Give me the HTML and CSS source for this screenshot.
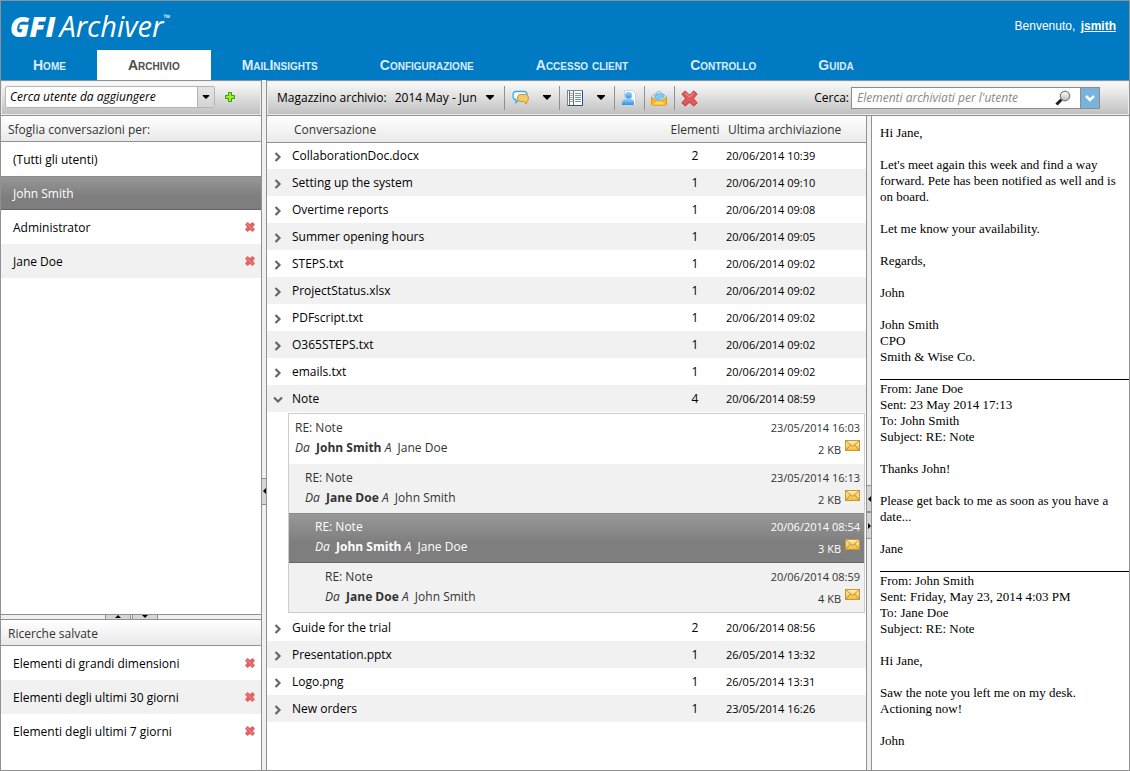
FILE: index.html
```html
<!DOCTYPE html>
<html lang="it">
<head>
<meta charset="utf-8">
<title>GFI Archiver</title>
<link rel="stylesheet" href="styles.css">
</head>
<body>
<svg class="defs" width="0" height="0" aria-hidden="true">
  <defs>
    <linearGradient id="gold" x1="0" y1="0" x2="0" y2="1"><stop offset="0" stop-color="#fdf0b0"/><stop offset="1" stop-color="#f3bb33"/></linearGradient>
    <linearGradient id="blue" x1="0" y1="0" x2="0" y2="1"><stop offset="0" stop-color="#9fd6fa"/><stop offset="1" stop-color="#2f93de"/></linearGradient>
    <linearGradient id="glass" x1="0" y1="0" x2="0" y2="1"><stop offset="0" stop-color="#ffffff"/><stop offset="1" stop-color="#b9b9b9"/></linearGradient>
    <symbol id="cross" viewBox="0 0 16 16"><path d="M4 1l4 4 4-4 3 3-3.5 4 3.500 4-3 3-4-3.500-4 3.500-3-3 3.500-4L1 4z" fill="#e05c5c" stroke="#c94343" stroke-width="1" stroke-linejoin="round"/><path d="M4 2.500l4 4 4-4" fill="none" stroke="#f08f8f"/></symbol>
    <symbol id="cross-small" viewBox="0 0 10 10"><path d="M2.500 0L5 2 7.500 0 10 2.500 8 5l2 2.500L7.500 10 5 8l-2.500 2L0 7.500 2 5 0 2.500z" fill="#e06464"/><path d="M2 2l6 6" stroke="#ee8a8a" stroke-width="1"/></symbol>
    <symbol id="caret" viewBox="0 0 10 6"><path d="M1 0h8v1L5 5 1 1z" fill="#000"/></symbol>
    <symbol id="chev" viewBox="0 0 8 10"><path d="M1.500 1L5.500 5l-4 4" fill="none" stroke="#666" stroke-width="2.200"/></symbol>
    <symbol id="chevdown" viewBox="0 0 10 8"><path d="M1 1.500L5 5.500l4-4" fill="none" stroke="#666" stroke-width="2.200"/></symbol>
    <symbol id="mail" viewBox="0 0 15 12"><rect x=".5" y=".5" width="14" height="10" fill="url(#gold)" stroke="#c9973b"/><path d="M1 1l6.500 5.500L14 1M1 10l4.500-5M14 10L9.500 5" fill="none" stroke="#b98432" stroke-width=".9"/></symbol>
  </defs>
</svg>
<div class="app">
  <header class="top">
    <div class="brand-row">
      <h1 class="logo"><b>GFI</b><i>Archiver</i><sup>™</sup></h1>
      <p class="welcome">Benvenuto, <a href="#">jsmith</a></p>
    </div>
    <nav class="tabs">
      <a href="#">Home</a>
      <a href="#" class="active" aria-current="page">Archivio</a>
      <a href="#">MailInsights</a>
      <a href="#">Configurazione</a>
      <a href="#">Accesso client</a>
      <a href="#">Controllo</a>
      <a href="#">Guida</a>
    </nav>
  </header>

  <div class="workspace">
    <aside class="sidebar">
      <div class="toolbar user-bar">
        <div class="combo">
          <input type="text" value="Cerca utente da aggiungere" aria-label="Cerca utente da aggiungere">
          <button type="button" aria-label="Mostra utenti"><svg width="8" height="5"><use href="#caret"/></svg></button>
        </div>
        <button type="button" class="icon-btn" aria-label="Aggiungi"><svg width="12" height="12" viewBox="0 0 12 12"><path d="M4.500 1.500h3v3h3v3h-3v3h-3v-3h-3v-3h3z" fill="#a4ec1c" stroke="#27a318"/></svg></button>
      </div>
      <h2 class="bar">Sfoglia conversazioni per:</h2>
      <ul class="list users">
        <li><a href="#">(Tutti gli utenti)</a></li>
        <li class="selected"><a href="#">John Smith</a></li>
        <li><a href="#">Administrator</a><button type="button" class="icon-btn" aria-label="Rimuovi Administrator"><svg width="10" height="10"><use href="#cross-small"/></svg></button></li>
        <li class="alt"><a href="#">Jane Doe</a><button type="button" class="icon-btn" aria-label="Rimuovi Jane Doe"><svg width="10" height="10"><use href="#cross-small"/></svg></button></li>
      </ul>
      <div class="hsplit">
        <button type="button" aria-label="Comprimi sopra"><svg width="6" height="3" viewBox="0 0 6 3"><path d="M0 3l3-3 3 3z"/></svg></button>
        <button type="button" aria-label="Comprimi sotto"><svg width="6" height="3" viewBox="0 0 6 3"><path d="M0 0l3 3 3-3z"/></svg></button>
      </div>
      <h2 class="bar">Ricerche salvate</h2>
      <ul class="list saved">
        <li><a href="#">Elementi di grandi dimensioni</a><button type="button" class="icon-btn" aria-label="Elimina ricerca"><svg width="10" height="10"><use href="#cross-small"/></svg></button></li>
        <li class="alt"><a href="#">Elementi degli ultimi 30 giorni</a><button type="button" class="icon-btn" aria-label="Elimina ricerca"><svg width="10" height="10"><use href="#cross-small"/></svg></button></li>
        <li><a href="#">Elementi degli ultimi 7 giorni</a><button type="button" class="icon-btn" aria-label="Elimina ricerca"><svg width="10" height="10"><use href="#cross-small"/></svg></button></li>
      </ul>
    </aside>

    <div class="vsplit left-split">
      <button type="button" aria-label="Comprimi a sinistra"><svg width="3" height="6" viewBox="0 0 3 6"><path d="M3 0L0 3l3 3z"/></svg></button>
    </div>

    <main class="main">
      <div class="toolbar main-bar">
        <label for="store">Magazzino archivio:</label>
        <div class="period">
          <select id="store"><option>2014 May - Jun</option></select>
          <svg width="10" height="6"><use href="#caret"/></svg>
        </div>
        <button type="button" class="tool wide" aria-label="Conversazioni">
          <svg width="17" height="16" viewBox="0 0 17 16"><path d="M4 1.500h8q3 0 3 4t-3 4H7l-3 3v-3q-3 0-3-4t3-4z" fill="#fff" stroke="#35aee8" stroke-width="1.300"/><path d="M8 4.500h5.500q3 0 3 3.500t-2 3.500v2.500l-3-2.500H8q-2.500 0-2.500-3.500T8 4.500z" fill="#f0cc66" stroke="#c79a35"/></svg>
          <svg width="10" height="6"><use href="#caret"/></svg>
        </button>
        <button type="button" class="tool wide" aria-label="Visualizzazione">
          <svg width="16" height="16" viewBox="0 0 16 16"><rect x=".5" y=".5" width="15" height="15" fill="#fff" stroke="#7d8594"/><path d="M15.500 1v14.500H1" fill="none" stroke="#2c4f8c"/><path d="M2.500 1v14M6.500 1v14" stroke="#66718a" fill="none"/><path d="M3 3.500h3M3 5.500h3M3 7.500h3M3 9.500h3M3 11.500h3" stroke="#a5a9b5"/><path d="M8 3.500h6M8 5.500h6M8 7.500h6M8 9.500h6M8 11.500h6" stroke="#6b94de"/></svg>
          <svg width="10" height="6"><use href="#caret"/></svg>
        </button>
        <button type="button" class="tool" aria-label="Utente">
          <svg width="16" height="16" viewBox="0 0 16 16"><path d="M3.500.5h8l3 3v12h-11z" fill="#fff" stroke="#c6d3de"/><circle cx="7.500" cy="5.500" r="3.200" fill="url(#blue)" stroke="#5aaee8" stroke-width=".6"/><path d="M1 15v-3q1-3 4-3.500 2.500 1.500 5 0 3 1 3 3.500v3z" fill="url(#blue)"/></svg>
        </button>
        <button type="button" class="tool" aria-label="Apri messaggio">
          <svg width="16" height="16" viewBox="0 0 16 16"><path d="M.5 7L8 1l7.500 6v7.500H.5z" fill="#e9f4fb" stroke="#8fb5cf"/><path d="M3 8.500q0-5.500 5.500-5.500 5 0 5 4.500l-5 4.500z" fill="#70bdf0"/><path d="M5 8l4-4M7 9l4-4M9 10l3-3" stroke="#b2def8"/><path d="M.5 7l4.500 4h6l4.500-4v7.500q0 .7-1 .7H1.500q-1 0-1-.7z" fill="#f6b922" stroke="#e09c12"/><path d="M1 14.500l4-3.500h6l4 3.500" fill="#ffd957" stroke="#e6a61e" stroke-width=".7"/></svg>
        </button>
        <button type="button" class="tool" aria-label="Elimina"><svg width="17" height="17"><use href="#cross"/></svg></button>
        <form class="search">
          <label for="q">Cerca:</label>
          <div class="search-box">
            <input id="q" type="text" placeholder="Elementi archiviati per l'utente">
            <button type="button" class="icon-btn" aria-label="Cerca"><svg width="16" height="16" viewBox="0 0 16 16"><path d="M6.500 9.500L1.500 14.500" stroke="#222" stroke-width="3"/><circle cx="10" cy="6" r="4.700" fill="url(#glass)" stroke="#888" stroke-width="1.400"/></svg></button>
          </div>
          <button type="button" class="search-more" aria-label="Opzioni di ricerca"><svg width="10" height="8" viewBox="0 0 10 8"><path d="M1 2l4 4 4-4" fill="none" stroke="#fff" stroke-width="2.500"/></svg></button>
        </form>
      </div>

      <div class="panes">
        <section class="conversations">
          <table>
            <colgroup><col class="c-exp"><col><col class="c-num"><col class="c-date"></colgroup>
            <thead><tr><th></th><th class="h-name">Conversazione</th><th class="num">Elementi</th><th class="h-date">Ultima archiviazione</th></tr></thead>
            <tbody>
              <tr><td><button type="button" class="exp" aria-label="Espandi"><svg width="8" height="10"><use href="#chev"/></svg></button></td><td>CollaborationDoc.docx</td><td class="num">2</td><td class="date">20/06/2014 10:39</td></tr>
              <tr class="alt"><td><button type="button" class="exp" aria-label="Espandi"><svg width="8" height="10"><use href="#chev"/></svg></button></td><td>Setting up the system</td><td class="num">1</td><td class="date">20/06/2014 09:10</td></tr>
              <tr><td><button type="button" class="exp" aria-label="Espandi"><svg width="8" height="10"><use href="#chev"/></svg></button></td><td>Overtime reports</td><td class="num">1</td><td class="date">20/06/2014 09:08</td></tr>
              <tr class="alt"><td><button type="button" class="exp" aria-label="Espandi"><svg width="8" height="10"><use href="#chev"/></svg></button></td><td>Summer opening hours</td><td class="num">1</td><td class="date">20/06/2014 09:05</td></tr>
              <tr><td><button type="button" class="exp" aria-label="Espandi"><svg width="8" height="10"><use href="#chev"/></svg></button></td><td>STEPS.txt</td><td class="num">1</td><td class="date">20/06/2014 09:02</td></tr>
              <tr class="alt"><td><button type="button" class="exp" aria-label="Espandi"><svg width="8" height="10"><use href="#chev"/></svg></button></td><td>ProjectStatus.xlsx</td><td class="num">1</td><td class="date">20/06/2014 09:02</td></tr>
              <tr><td><button type="button" class="exp" aria-label="Espandi"><svg width="8" height="10"><use href="#chev"/></svg></button></td><td>PDFscript.txt</td><td class="num">1</td><td class="date">20/06/2014 09:02</td></tr>
              <tr class="alt"><td><button type="button" class="exp" aria-label="Espandi"><svg width="8" height="10"><use href="#chev"/></svg></button></td><td>O365STEPS.txt</td><td class="num">1</td><td class="date">20/06/2014 09:02</td></tr>
              <tr><td><button type="button" class="exp" aria-label="Espandi"><svg width="8" height="10"><use href="#chev"/></svg></button></td><td>emails.txt</td><td class="num">1</td><td class="date">20/06/2014 09:02</td></tr>
              <tr class="alt"><td><button type="button" class="exp" aria-label="Comprimi" aria-expanded="true"><svg width="10" height="8"><use href="#chevdown"/></svg></button></td><td>Note</td><td class="num">4</td><td class="date">20/06/2014 08:59</td></tr>
              <tr class="thread-row"><td colspan="4">
                <ol class="thread">
                  <li class="d0"><div><p>RE: Note</p><p><i>Da</i>&nbsp; <b>John Smith</b> <i>A</i>&nbsp; Jane Doe</p></div><div class="meta"><time>23/05/2014 16:03</time><span>2 KB <svg width="15" height="12"><use href="#mail"/></svg></span></div></li>
                  <li class="d1 alt"><div><p>RE: Note</p><p><i>Da</i>&nbsp; <b>Jane Doe</b> <i>A</i>&nbsp; John Smith</p></div><div class="meta"><time>23/05/2014 16:13</time><span>2 KB <svg width="15" height="12"><use href="#mail"/></svg></span></div></li>
                  <li class="d2 selected"><div><p>RE: Note</p><p><i>Da</i>&nbsp; <b>John Smith</b> <i>A</i>&nbsp; Jane Doe</p></div><div class="meta"><time>20/06/2014 08:54</time><span>3 KB <svg width="15" height="12"><use href="#mail"/></svg></span></div></li>
                  <li class="d3 alt"><div><p>RE: Note</p><p><i>Da</i>&nbsp; <b>Jane Doe</b> <i>A</i>&nbsp; John Smith</p></div><div class="meta"><time>20/06/2014 08:59</time><span>4 KB <svg width="15" height="12"><use href="#mail"/></svg></span></div></li>
                </ol>
              </td></tr>
              <tr><td><button type="button" class="exp" aria-label="Espandi"><svg width="8" height="10"><use href="#chev"/></svg></button></td><td>Guide for the trial</td><td class="num">2</td><td class="date">20/06/2014 08:56</td></tr>
              <tr class="alt"><td><button type="button" class="exp" aria-label="Espandi"><svg width="8" height="10"><use href="#chev"/></svg></button></td><td>Presentation.pptx</td><td class="num">1</td><td class="date">26/05/2014 13:32</td></tr>
              <tr><td><button type="button" class="exp" aria-label="Espandi"><svg width="8" height="10"><use href="#chev"/></svg></button></td><td>Logo.png</td><td class="num">1</td><td class="date">26/05/2014 13:31</td></tr>
              <tr class="alt"><td><button type="button" class="exp" aria-label="Espandi"><svg width="8" height="10"><use href="#chev"/></svg></button></td><td>New orders</td><td class="num">1</td><td class="date">23/05/2014 16:26</td></tr>
            </tbody>
          </table>
        </section>

        <div class="vsplit right-split">
          <button type="button" aria-label="Espandi anteprima"><svg width="3" height="6" viewBox="0 0 3 6"><path d="M3 0L0 3l3 3z"/></svg></button>
          <button type="button" aria-label="Comprimi anteprima"><svg width="3" height="6" viewBox="0 0 3 6"><path d="M0 0l3 3-3 3z"/></svg></button>
        </div>

        <article class="reader">
          <p>Hi Jane,</p>
          <p>Let's meet again this week and find a way forward. Pete has been notified as well and is on board.</p>
          <p>Let me know your availability.</p>
          <p>Regards,</p>
          <p>John</p>
          <p>John Smith<br>CPO<br>Smith &amp; Wise Co.</p>
          <p class="quote-head">From: Jane Doe<br>Sent: 23 May 2014 17:13<br>To: John Smith<br>Subject: RE: Note</p>
          <p>Thanks John!</p>
          <p>Please get back to me as soon as you have a date...</p>
          <p>Jane</p>
          <p class="quote-head">From: John Smith<br>Sent: Friday, May 23, 2014 4:03 PM<br>To: Jane Doe<br>Subject: RE: Note</p>
          <p>Hi Jane,</p>
          <p>Saw the note you left me on my desk. Actioning now!</p>
          <p>John</p>
        </article>
      </div>
    </main>
  </div>
</div>
</body>
</html>
```
FILE: styles.css
```css
* { box-sizing: border-box; }
body, h1, h2, p, ul, ol { margin: 0; padding: 0; }
ul, ol { list-style: none; }
body {
  font: 12px/16px "Open Sans", "Noto Sans", sans-serif;
  color: #000;
  background: #fff;
}
button, input, select { font: inherit; color: inherit; margin: 0; padding: 0; border: 0; background: none; }
svg { display: block; flex: none; }
.defs { position: absolute; }
a { color: inherit; text-decoration: none; }

.app { display: flex; flex-direction: column; min-height: 100vh; border: 1px solid #919191; }

/* header */
.top { background: #007ac2; color: #fff; }
.brand-row { display: flex; justify-content: space-between; height: 49px; padding: 0 13px 0 9px; }
.logo { font: 29px/50px "Open Sans", sans-serif; white-space: nowrap; }
.logo b { margin-right: 4px; font-size: 28px; font-weight: 800; font-style: italic; }
.logo sup { font-size: 9px; line-height: 9px; vertical-align: 16px; }
.welcome { padding-top: 17px; font: 12px/16px "Liberation Sans", sans-serif; }
.welcome a { font-weight: bold; text-decoration: underline; margin-left: 2px; }
.tabs { display: flex; height: 30px; padding-left: 1px; }
.tabs a {
  padding: 0 31px;
  font: bold 14px/30px "Liberation Sans", sans-serif;
  font-variant: small-caps;
  color: #dcecf7;
}
.tabs .active { background: #fff; color: #4d4d4d; }

/* shared bars */
.workspace { flex: 1; display: flex; }
.toolbar {
  display: flex;
  align-items: center;
  height: 36px;
  border-top: 1px solid #919191;
  border-bottom: 1px solid #919191;
  background: linear-gradient(#fcfcfc, #bfbfbf);
  box-shadow: inset 0 0 0 1px #ededed;
}
.bar, th {
  height: 26px;
  border-bottom: 1px solid #919191;
  background: linear-gradient(#fff, #e9e9e9);
  font-size: 12px;
  font-weight: normal;
  color: #333;
}
.bar { padding: 6px 7px 3px; line-height: 16px; }
th { padding: 2px 0 0; }
.icon-btn { display: flex; align-items: center; justify-content: center; }
.alt { background: #f1f1f1; }

/* sidebar */
.sidebar { display: flex; flex-direction: column; width: 261px; border-right: 1px solid #919191; }
.user-bar { padding: 0 4px 2px; gap: 9px; }
.combo { display: flex; width: 210px; height: 22px; border: 1px solid #b5b5b5; border-radius: 2px; background: #fff; }
.combo input { flex: 1; min-width: 0; padding: 0 4px; font-style: italic; }
.combo button { display: flex; align-items: center; justify-content: center; width: 17px; border-left: 1px solid #b5b5b5; background: linear-gradient(#e4e4e4, #d4d4d4); }
.list li { display: flex; align-items: center; justify-content: space-between; height: 34px; padding: 0 6px 0 12px; }
.list a { padding-top: 1px; }
.users { flex: 1; }
.saved { height: 124px; }
.selected {
  color: #fff;
  background: linear-gradient(#999, #7e7e7e 60%);
  box-shadow: inset 0 1px #8a8a8a, inset 0 -1px #666;
}

/* splitters */
.hsplit { display: flex; justify-content: center; gap: 1px; height: 6px; border-top: 1px solid #919191; border-bottom: 1px solid #919191; background: #f0f0f0; }
.hsplit button { display: flex; justify-content: center; width: 26px; height: 4px; border: 1px solid #919191; border-width: 0 1px; background: #d6d6d6; }
.vsplit { display: flex; flex-direction: column; width: 5px; border-right: 1px solid #919191; background: #f0f0f0; }
.vsplit::before { content: ""; flex: 8; }
.vsplit::after { content: ""; flex: 5; }
.left-split::before { flex: 3; }
.left-split::after { flex: 2; }
.vsplit button { display: flex; align-items: center; justify-content: flex-end; height: 27px; border: 1px solid #919191; border-width: 1px 0; background: #d6d6d6; }

/* main toolbar */
.main { flex: 1; min-width: 0; display: flex; flex-direction: column; }
.main-bar { padding: 0 29px 0 10px; }
.period { display: flex; align-items: center; gap: 8px; margin-left: 5px; padding-right: 9px; }
.period select { appearance: none; width: 85px; padding-left: 3px; }
.tool { display: flex; align-items: center; justify-content: center; width: 30px; height: 24px; border-left: 1px solid #919191; }
.tool.wide { width: 55px; gap: 13px; }
.search { display: flex; align-items: center; margin-left: auto; }
.search label { margin-right: 2px; }
.search-box { display: flex; width: 229px; height: 22px; border: 1px solid #8c8c8c; border-right: 0; background: #fff; }
.search-box input { flex: 1; min-width: 0; padding: 0 5px; font-style: italic; }
.search-box input::placeholder { color: #888; opacity: 1; }
.search-box .icon-btn { width: 34px; }
.search-more { display: flex; align-items: center; justify-content: center; width: 20px; height: 22px; border: 1px solid #8c8c8c; background: #77b3da; }

/* conversations */
.panes { flex: 1; display: flex; }
.conversations { flex: 1; min-width: 0; border-right: 1px solid #919191; }
table { width: 100%; table-layout: fixed; border-collapse: collapse; }
.c-exp { width: 25px; }
.c-num { width: 60px; }
.c-date { width: 140px; }
th, td { text-align: left; white-space: nowrap; }
td { height: 27px; padding: 0; }
.h-name, .h-date { padding-left: 2px; }
.num { padding-right: 2px; text-align: center; }
.date, time { font-size: 11px; }
.exp { display: flex; align-items: center; justify-content: center; width: 22px; height: 24px; padding-top: 2px; }
.thread-row td { padding: 1px 1px 1px 21px; }
.thread { border: 1px solid #ccc; color: #333; }
.thread li { display: flex; justify-content: space-between; height: 49px; padding: 4px 4px 0 6px; line-height: 20px; }
.thread li:nth-child(odd) { height: 50px; }
.thread .d1 { padding-left: 16px; }
.thread .d2 { padding-left: 26px; color: #fff; }
.thread .d3 { padding-left: 36px; }
.meta { display: flex; flex-direction: column; align-items: flex-end; }
.meta span { display: flex; gap: 4px; padding-top: 2px; font-size: 11px; }

/* reader */
.reader { width: 257px; padding: 9px 0 0 8px; font: 13px/16px "Liberation Serif", serif; }
.reader p { margin-bottom: 16px; padding-right: 12px; }
.reader .quote-head { margin-top: -2px; border-top: 1px solid #000; padding-top: 1px; }
```
